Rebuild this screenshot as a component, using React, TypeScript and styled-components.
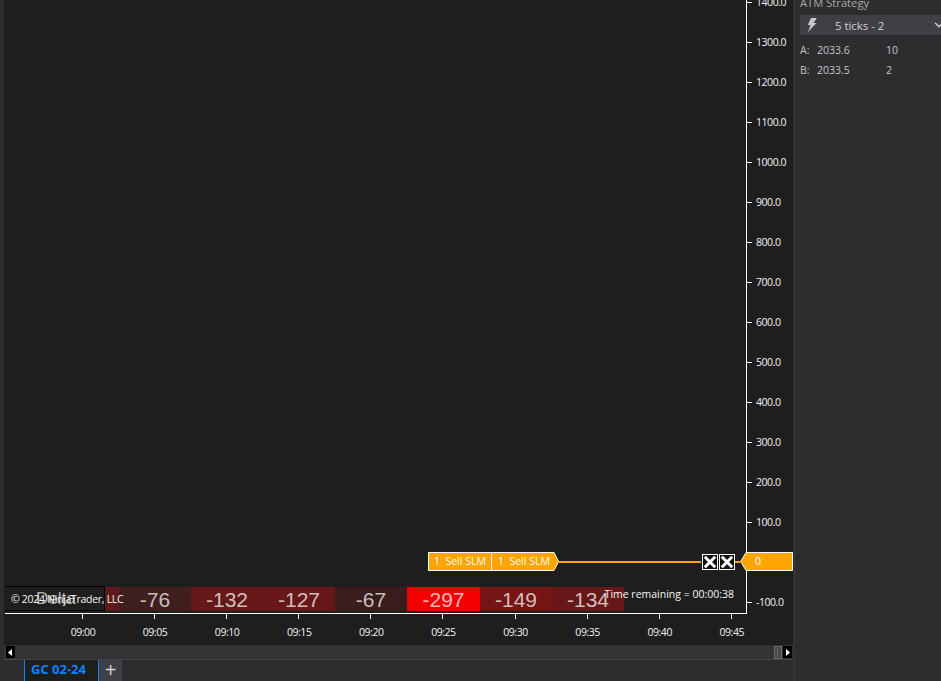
import React from "react";
import styled, { createGlobalStyle } from "styled-components";
import { ChevronDown } from "lucide-react";

const Global = createGlobalStyle`
  html, body { margin: 0; padding: 0; background: #2d2d30; }
  * { box-sizing: border-box; }
`;

const uiFont = `"Open Sans", "Noto Sans", sans-serif`;

const Page = styled.div`
  width: 941px;
  height: 681px;
  display: flex;
  overflow: hidden;
  background: #2d2d30;
  font-family: ${uiFont};
`;
const ChartColumn = styled.div`
  width: 794px;
  display: flex;
  flex-direction: column;
`;
const ChartFrame = styled.div`
  position: relative;
  margin-left: 4px;
  width: 789px;
  height: 660px;
  background: #1e1e1e;
  display: flex;
  flex-direction: column;
  overflow: hidden;
`;
const ChartMain = styled.div`
  height: 645px;
  display: flex;
`;
const LeftColumn = styled.div`
  width: 743px;
  display: flex;
  flex-direction: column;
`;
const Plot = styled.div`
  position: relative;
  height: 614px;
  margin-left: 1px;
  border-right: 1px solid #fff;
  border-bottom: 1px solid #fff;
`;
const DeltaRow = styled.div`
  position: absolute;
  left: 0;
  top: 587px;
  height: 24px;
  display: flex;
  align-items: stretch;
`;
const DeltaLabel = styled.div`
  width: 100px;
  margin-top: -1px;
  padding-left: 31px;
  background: #1e1e1e;
  color: #b8b8b8;
  font: 17px/26px "Liberation Sans", Arial, sans-serif;
`;
const DeltaCell = styled.div<{ $w: number; $bg: string }>`
  width: ${(p) => p.$w}px;
  background: ${(p) => p.$bg};
  color: rgba(255, 255, 255, 0.72);
  text-align: center;
  font: 21px/25px "Liberation Sans", Arial, sans-serif;
`;
const Copyright = styled.div`
  position: absolute;
  left: 0;
  top: 586px;
  width: 100px;
  height: 25px;
  border: 1px solid #000;
  border-left-width: 0;
  padding-left: 6px;
  color: #f6f6f6;
  font-size: 10.5px;
  letter-spacing: -0.3px;
  line-height: 24px;
  white-space: nowrap;
`;
const Remaining = styled.div`
  position: absolute;
  right: 12px;
  top: 586px;
  color: #f6f6f6;
  font-size: 10.5px;
  line-height: 16px;
  white-space: nowrap;
`;
const TimeAxis = styled.div`
  height: 31px;
  padding-left: 42.4px;
  display: grid;
  grid-auto-flow: column;
  grid-auto-columns: 72.1px;
`;
const TimeSlot = styled.div`
  display: flex;
  flex-direction: column;
  align-items: center;
`;
const TimeTick = styled.div`
  width: 1px;
  height: 5px;
  background: #fff;
`;
const TimeText = styled.div`
  margin: 6px 0 0 1px;
  color: #f2f2f2;
  font-size: 10.5px;
  letter-spacing: -0.45px;
  line-height: 14px;
`;
const PriceAxis = styled.div`
  width: 46px;
  height: 645px;
  padding-bottom: 23px;
  display: flex;
  flex-direction: column;
  justify-content: flex-end;
  overflow: hidden;
`;
const PriceRow = styled.div`
  flex: 0 0 40px;
  display: flex;
  align-items: center;
`;
const PriceTick = styled.div`
  width: 5px;
  height: 1px;
  background: #fff;
`;
const PriceText = styled.div`
  margin-left: 4px;
  color: #f2f2f2;
  font-size: 10.5px;
  letter-spacing: -0.45px;
  white-space: nowrap;
`;
const OrderRow = styled.div`
  position: absolute;
  left: 424px;
  top: 552px;
  width: 365px;
  height: 19px;
  display: flex;
  align-items: center;
`;
const OrderTag = styled.div`
  position: relative;
  width: 131px;
  height: 19px;
  display: flex;
  flex: none;
`;
const TagShape = styled.svg`
  position: absolute;
  inset: 0;
  display: block;
`;
const OrderPart = styled.div<{ $w: number }>`
  position: relative;
  width: ${(p) => p.$w}px;
  padding-left: 6px;
  color: #fff;
  font-size: 10.5px;
  line-height: 19px;
  white-space: pre;
`;
const OrderDivider = styled.div`
  position: relative;
  width: 1px;
  background: #fff;
`;
const OrderLine = styled.div<{ $grow?: boolean }>`
  height: 2px;
  background: #ffa500;
  flex: ${(p) => (p.$grow ? "1" : "0 0 5px")};
`;
const CloseButton = styled.div`
  flex: none;
  width: 16px;
  height: 16px;
  margin-left: 1px;
  background: #111;
  border: 1px solid #fff;
  display: flex;
  align-items: center;
  justify-content: center;
`;
const PriceTag = styled.div`
  position: relative;
  flex: none;
  width: 53px;
  height: 19px;
`;
const PriceTagText = styled.div`
  position: relative;
  padding-left: 15px;
  color: #fff;
  font-size: 10.5px;
  line-height: 19px;
`;
const ScrollBar = styled.div`
  height: 15px;
  background: #333334;
  border-bottom: 1px solid #444448;
  display: flex;
  align-items: center;
  justify-content: space-between;
  padding: 0 1px 0 2px;
`;
const ScrollEnd = styled.div`
  display: flex;
  align-items: center;
`;
const ArrowButton = styled.div`
  width: 9px;
  height: 12px;
  background: #000;
  display: flex;
  align-items: center;
  justify-content: center;
`;
const Thumb = styled.div`
  position: relative;
  width: 8px;
  height: 13px;
  margin-right: 1px;
  background: #47474a;
  border: 1px solid #6e6e6e;
  &::after {
    content: "";
    position: absolute;
    left: 2px;
    top: 1px;
    bottom: 1px;
    width: 1px;
    background: #6a6a6a;
  }
`;
const TabStrip = styled.div`
  padding-left: 24px;
  height: 21px;
  display: flex;
`;
const Tab = styled.div`
  width: 75px;
  padding-left: 6px;
  background: #1e1e1e;
  border-left: 1px solid #0a84ff;
  border-right: 1px solid #0a84ff;
  color: #0a84ff;
  font-size: 13px;
  font-weight: 700;
  line-height: 19px;
  white-space: nowrap;
`;
const AddTab = styled.div`
  width: 23px;
  background: #3f3f46;
  color: #d0d0d0;
  font: 20px/20px "Liberation Sans", Arial, sans-serif;
  text-align: center;
`;
const Side = styled.div`
  flex: 1;
  border-left: 1px solid #3a3a3e;
  padding: 0 0 0 5px;
  color: #c4c4c4;
  font-size: 10.5px;
  overflow: hidden;
`;
const SideTitle = styled.div`
  height: 15px;
  margin-top: -5px;
  color: #a8a8a0;
  font-size: 11.2px;
  line-height: 16px;
  white-space: nowrap;
`;
const SelectBox = styled.div`
  margin-top: 5px;
  width: 146px;
  height: 20px;
  background: #3f3f46;
  display: flex;
  align-items: center;
  padding-left: 7px;
  color: #d0d0d0;
  font-size: 11.4px;
`;
const SelectValue = styled.span`
  margin-left: 18px;
  width: 98px;
  white-space: nowrap;
`;
const Quote = styled.div`
  display: grid;
  grid-template-columns: 17px 69px 30px;
  height: 20px;
  align-items: center;
  &:first-of-type { margin-top: 5px; }
`;
const QuoteList = styled.div`
  margin-top: 5px;
`;

const cells: [number, string, string][] = [
  [14, "#5c1a1a", ""],
  [72, "#3f1e1e", "-76"],
  [72, "#641818", "-132"],
  [72, "#671717", "-127"],
  [72, "#391c1c", "-67"],
  [73, "#f50000", "-297"],
  [72, "#751414", "-149"],
  [72, "#671717", "-134"],
];
const times = ["09:00", "09:05", "09:10", "09:15", "09:20", "09:25", "09:30", "09:35", "09:40", "09:45"];
const prices = [1400, 1300, 1200, 1100, 1000, 900, 800, 700, 600, 500, 400, 300, 200, 100, 0, -100];

const CloseIcon = () => (
  <svg width="14" height="14" viewBox="0 0 14 14">
    <path d="M1.8 1.8 12.2 12.2M12.2 1.8 1.8 12.2" stroke="#fff" strokeWidth="3" />
  </svg>
);

export default function App() {
  return (
    <Page>
      <Global />
      <ChartColumn>
        <ChartFrame>
          <ChartMain>
            <LeftColumn>
              <Plot>
                <DeltaRow>
                  <DeltaLabel>Delta</DeltaLabel>
                  {cells.map(([w, bg, t], i) => (
                    <DeltaCell key={i} $w={w} $bg={bg}>{t}</DeltaCell>
                  ))}
                </DeltaRow>
                <Copyright>© 2024 NinjaTrader, LLC</Copyright>
                <Remaining>Time remaining = 00:00:38</Remaining>
              </Plot>
              <TimeAxis>
                {times.map((t) => (
                  <TimeSlot key={t}>
                    <TimeTick />
                    <TimeText>{t}</TimeText>
                  </TimeSlot>
                ))}
              </TimeAxis>
            </LeftColumn>
            <PriceAxis>
              {prices.map((p) => (
                <PriceRow key={p}>
                  <PriceTick />
                  <PriceText>{p === 0 ? "" : p.toFixed(1)}</PriceText>
                </PriceRow>
              ))}
            </PriceAxis>
          </ChartMain>
          <OrderRow>
            <OrderTag>
              <TagShape width="131" height="19" viewBox="0 0 131 19">
                <path d="M.5.5H126L130.5 9.5 126 18.5H.5Z" fill="#ffa500" stroke="#fff" />
              </TagShape>
              <OrderPart $w={63}>1  Sell SLM</OrderPart>
              <OrderDivider />
              <OrderPart $w={67}>1  Sell SLM</OrderPart>
            </OrderTag>
            <OrderLine $grow />
            <CloseButton><CloseIcon /></CloseButton>
            <CloseButton><CloseIcon /></CloseButton>
            <OrderLine />
            <PriceTag>
              <TagShape width="53" height="19" viewBox="0 0 53 19">
                <path d="M52.5.5H6L.7 9.5 6 18.5H52.5Z" fill="#ffa500" stroke="#fff" />
              </TagShape>
              <PriceTagText>0</PriceTagText>
            </PriceTag>
          </OrderRow>
          <ScrollBar>
            <ArrowButton>
              <svg width="5" height="7" viewBox="0 0 5 7"><path d="M4 0V7L0 3.5Z" fill="#fff" /></svg>
            </ArrowButton>
            <ScrollEnd>
              <Thumb />
              <ArrowButton>
                <svg width="5" height="7" viewBox="0 0 5 7"><path d="M1 0V7L5 3.5Z" fill="#fff" /></svg>
              </ArrowButton>
            </ScrollEnd>
          </ScrollBar>
        </ChartFrame>
        <TabStrip>
          <Tab>GC 02-24</Tab>
          <AddTab>+</AddTab>
        </TabStrip>
      </ChartColumn>
      <Side>
        <SideTitle>ATM Strategy</SideTitle>
        <SelectBox>
          <svg width="10" height="14" viewBox="0 0 10 14">
            <path d="M4 0H10L6.5 5H9.5L1 14 3.6 7H.8Z" fill="#c8c8c8" />
          </svg>
          <SelectValue>5 ticks - 2</SelectValue>
          <ChevronDown size={14} strokeWidth={2.5} color="#d0d0d0" />
        </SelectBox>
        <QuoteList>
          <Quote><span>A:</span><span>2033.6</span><span>10</span></Quote>
          <Quote><span>B:</span><span>2033.5</span><span>2</span></Quote>
        </QuoteList>
      </Side>
    </Page>
  );
}
